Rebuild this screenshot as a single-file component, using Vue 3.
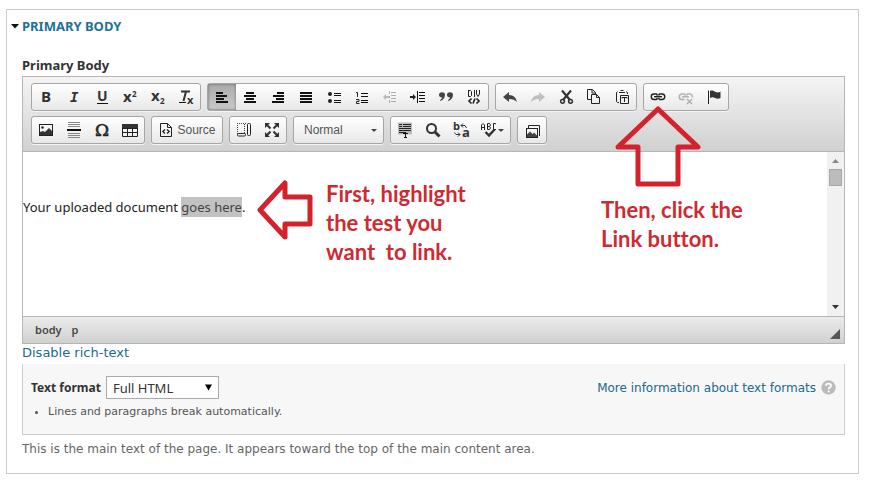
<script setup>
import { ref } from 'vue'

const format = ref('full')
const style = ref('normal')

const glyph = (ch, x, y, size) =>
  `<text x="${x}" y="${y}" font-family="'Open Sans', sans-serif" font-weight="700" font-size="${size}" fill="#333">${ch}</text>`
const slanted = (ch, x, y, size) =>
  `<text x="${x}" y="${y}" font-family="'DejaVu Sans Mono', monospace" font-style="italic" font-weight="700" font-size="${size}" fill="#333">${ch}</text>`
const bars = (rows) =>
  rows.map(([x, y, w, h = 2]) => `<rect x="${x}" y="${y}" width="${w}" height="${h}" fill="#111"/>`).join('')

const firstRow = [
  [
    { label: 'Bold', icon: glyph('B', 3, 13, 15) },
    { label: 'Italic', icon: slanted('I', 4, 13, 14) },
    { label: 'Underline', icon: glyph('U', 3, 12, 14) + bars([[3, 14, 11, 1]]) },
    { label: 'Superscript', icon: glyph('x', 1, 13, 15) + glyph('2', 10, 8, 8) },
    { label: 'Subscript', icon: glyph('x', 1, 12, 15) + glyph('2', 10, 15, 8) },
    { label: 'Remove format', icon: `<path d="M3 2.500H12M8 2.500L5.500 12" fill="none" stroke="#333" stroke-width="2"/>` + bars([[1, 13, 7, 1]]) + glyph('x', 9, 15, 11) },
  ],
  [
    { label: 'Align left', on: true, icon: bars([[2, 3, 7], [2, 6, 11], [2, 9, 8], [2, 12, 12]]) },
    { label: 'Center', icon: bars([[4, 3, 8], [2, 6, 12], [4, 9, 8], [2, 12, 12]]) },
    { label: 'Align right', icon: bars([[7, 3, 7], [3, 6, 11], [6, 9, 8], [2, 12, 12]]) },
    { label: 'Justify', icon: bars([[2, 3, 12], [2, 6, 12], [2, 9, 12], [2, 12, 12]]) },
    { label: 'Bulleted list', icon: `<circle cx="4" cy="5" r="2" fill="#222"/><circle cx="4" cy="12" r="2" fill="#222"/>` + bars([[8, 4, 7, 1], [8, 6, 7, 1], [8, 11, 7, 1], [8, 13, 7, 1]]) },
    { label: 'Numbered list', icon: `<path d="M2 3.500H3.500V8M2 10.500H5V12.500H2.500V14.500H5.500" fill="none" stroke="#222"/>` + bars([[7, 4, 7, 1], [7, 7, 7, 1], [7, 11, 7, 1], [7, 13, 7, 1]]) },
    { label: 'Decrease indent', off: true, icon: `<path d="M1 8L4 5V7H7V9H4V11Z" fill="#333"/>` + bars([[7, 2, 1, 3], [7, 11, 1, 3], [9, 3, 5, 1], [9, 6, 5, 1], [9, 9, 5, 1], [9, 12, 5, 1], [7, 7, 1, 2]]) },
    { label: 'Increase indent', icon: `<path d="M6 8L3 5V7H0V9H3V11Z" fill="#222"/>` + bars([[7, 2, 1, 12], [9, 3, 6, 1], [9, 6, 6, 1], [9, 9, 6, 1], [9, 12, 6, 1]]) },
    { label: 'Block quote', icon: `<path d="M1 6a3 2.700 0 1 1 6 0c0 3-2 5-4.500 6l-.5-1c1.200-.7 2-1.500 2-2.500C2 8.500 1 7.500 1 6zM9 6a3 2.700 0 1 1 6 0c0 3-2 5-4.500 6l-.5-1c1.200-.7 2-1.500 2-2.500C10 8.500 9 7.500 9 6z" fill="#444"/>` },
    { label: 'Create div', icon: `<path d="M2.500 1v6.500h2l1-1V2.500l-1-1h-2M8.500 1v7M10.500 1v4l1.500 2.500L13.500 5V1" fill="none" stroke="#222"/><path d="M5.500 9.500L3 12l2.500 2.500M10.500 9.500L13 12l-2.500 2.500M9 9.500L7 14.500" fill="none" stroke="#222" stroke-width="1.600"/>` },
  ],
  [
    { label: 'Undo', icon: `<path d="M1 8L7 3v3c5 0 7 3 8 7-2-2-4-3-8-3v3z" fill="#444"/>` },
    { label: 'Redo', off: true, icon: `<path d="M15 8L9 3v3c-5 0-7 3-8 7 2-2 4-3 8-3v3z" fill="#444"/>` },
    { label: 'Cut', icon: `<path d="M4 1.500L12 11M13 1.500L5 11" stroke="#333" stroke-width="2.200"/><circle cx="4.500" cy="12.300" r="1.900" fill="none" stroke="#333" stroke-width="1.500"/><circle cx="12.500" cy="12.300" r="1.900" fill="none" stroke="#333" stroke-width="1.500"/>` },
    { label: 'Copy', icon: `<path d="M5.500 10.500H1.500V.5H6.500L9.500 3.500V5M6 .5V4H9.500M5.500 5.500H10.500L13.500 8.500V14.500H5.500ZM10.500 5.500V8.500H13.500" fill="none" stroke="#222"/>` },
    { label: 'Paste as plain text', icon: `<path d="M3.500 2.500L2.500 3.500V12.500L3.500 13.500H5M12 2.500L13.500 3.500V5M5 3.500H11M6.500 1.500H9.500" fill="none" stroke="#222"/><path d="M6.500 6.500H14.500V14.500H6.500ZM8 9.500V8.500H13V9.500M10.500 8.500V13" fill="none" stroke="#222"/>` },
  ],
  [
    { label: 'Link', icon: `<path d="M7.500 6.500L6.500 5H4a2.500 2.500 0 0 0 0 5.500H6.500L7.500 9M8.500 6.500L9.500 5H12a2.500 2.500 0 0 1 0 5.500H9.500L8.500 9" fill="none" stroke="#222" stroke-width="1.400"/><path d="M4 7.700H12" stroke="#222" stroke-width="1.400"/>` },
    { label: 'Unlink', off: true, icon: `<path d="M7.500 6.500L6.500 5H4a2.500 2.500 0 0 0 0 5.500H6.500M8.500 6.500L9.500 5H12a2.500 2.500 0 0 1 2 3.500M4 7.700H11" fill="none" stroke="#222" stroke-width="1.500"/><path d="M9 10L14 15M14 10L9 15" stroke="#222" stroke-width="1.500"/>` },
    { label: 'Anchor', icon: `<path d="M2.500 1.500V15" stroke="#222"/><path d="M4 2c2-1 4 0 5.500 1 2 .8 3.500.5 5-.5V9c-2 1-3.500 1-5.500 0S6 8 4 9z" fill="#333"/>` },
  ],
]

const insertGroup = [
  { label: 'Image', icon: `<rect x="1.500" y="2.500" width="13" height="11" fill="none" stroke="#222"/><circle cx="4.500" cy="5.500" r="1.200" fill="#222"/><path d="M2 13V10l3-1 2 1 4-4 3 3v4z" fill="#333"/>` },
  { label: 'Horizontal line', icon: bars([[1, 7, 14, 2]]) + `<path d="M2 .5H14M2 2.500H14M2 4.500H14M2 11.500H14M2 13.500H14M2 15.500H14" stroke="#888"/>` },
  { label: 'Special character', icon: `<text x="1" y="14" font-family="'DejaVu Serif', serif" font-size="17" fill="#222" stroke="#222" stroke-width=".5">Ω</text>` },
  { label: 'Table', icon: `<path d="M.5 2.500H15.500V14.500H.5ZM.5 6.500H15.500M.5 10.500H15.500M5.500 5V14.500M10.500 5V14.500" fill="none" stroke="#222"/><path d="M0 2H16V6H0z" fill="#333"/>` },
]
const viewGroup = [
  { label: 'Show blocks', icon: `<path d="M1.500 1V12M1 1.500H10M8.500 2V11M2 11.500H9" fill="none" stroke="#444" stroke-dasharray="1 1"/><rect x="11.500" y="1.500" width="3" height="12" rx="1" fill="none" stroke="#222"/><rect x="1.500" y="11.500" width="8" height="2.500" rx="1" fill="#f5f5f5" stroke="#222"/>` },
  { label: 'Maximize', icon: `<path d="M1 1H6L1 6ZM15 1V6L10 1ZM1 15V10L6 15ZM15 15H10L15 10Z" fill="#333"/><path d="M2 2L6.500 6.500M14 2L9.500 6.500M2 14L6.500 9.500M14 14L9.500 9.500" stroke="#333" stroke-width="2"/>` },
]
const toolGroup = [
  { label: 'Select all', icon: `<path d="M1 .5H15V12.500H1z" fill="#bbb"/><path d="M2 2.500H5M6 2.500H14M2 4.500H5M6 4.500H14M2 6.500H14M2 8.500H14M2 10.500H9" stroke="#222"/><path d="M6 11.500H11M8.500 11V15.500M7 15.500H10" stroke="#111"/>` },
  { label: 'Find', icon: `<circle cx="6.500" cy="6.500" r="4.500" fill="none" stroke="#333" stroke-width="2"/><path d="M10 10L14.500 14.500" stroke="#333" stroke-width="3"/>` },
  { label: 'Replace', icon: glyph('b', 0, 8, 11) + glyph('a', 9, 15, 13) + `<path d="M8 3.500H12L13.500 6M10 1.500L8 3.500 10 5.500M1.500 10.500L3 12.500H7M5 10.500L7 12.500 5 14.500" fill="none" stroke="#333"/>` },
  { label: 'Spell check', drop: true, icon: `<path d="M.5 8V3L2 1.500 3.500 3V8M.5 5.500H3.500M6.500 1.500H8.500L9.500 3 8.500 4.500H6.500M8.500 4.500L9.500 6 8.500 7.500H6.500V1.500M15 2L14 1.500H12.500V7.500H15" fill="none" stroke="#222"/><path d="M4.500 10L8 13.500 13.500 7.500" fill="none" stroke="#333" stroke-width="2.400"/>` },
]
const mediaGroup = [
  { label: 'Media browser', icon: `<path d="M4.500 6V3.500H15.500V14" fill="none" stroke="#222"/><rect x="2.500" y="6.500" width="11" height="9" fill="#f5f5f5" stroke="#222"/><path d="M3 15V12.500L6 9.500l2.500 2.500 1.500-1.500 3 3V15z" fill="#444"/>` },
]
</script>

<template>
  <main class="page">
    <section class="fieldset">
      <a class="legend" href="#body">
        <svg width="8" height="5" viewBox="0 0 8 5" aria-hidden="true"><path d="M0 0H8L4 4.500Z" fill="#111" /></svg>
        PRIMARY BODY
      </a>

      <div id="body-label" class="label">Primary Body</div>
      <div class="editor">
        <div class="toolbar">
          <div class="row">
            <div v-for="(group, g) in firstRow" :key="g" class="group">
              <button v-for="b in group" :key="b.label" type="button" class="tool" :class="{ on: b.on, off: b.off }" :aria-label="b.label">
                <svg class="icon" viewBox="0 0 16 16" v-html="b.icon"></svg>
              </button>
            </div>
          </div>
          <div class="row">
            <div class="group">
              <button v-for="b in insertGroup" :key="b.label" type="button" class="tool" :aria-label="b.label">
                <svg class="icon" viewBox="0 0 16 16" v-html="b.icon"></svg>
              </button>
            </div>
            <div class="group">
              <button type="button" class="tool source">
                <svg class="icon" viewBox="0 0 16 16" aria-hidden="true">
                  <path d="M2.500 1.500H9.500L13.500 5.500V14.500H2.500ZM9.500 1.500V5.500H13.500" fill="none" stroke="#222" />
                  <path d="M7 7.500L4.800 9.500 7 11.500M9 7.500L11.200 9.500 9 11.500" fill="none" stroke="#222" stroke-width="1.300" />
                </svg>
                Source
              </button>
            </div>
            <div class="group">
              <button v-for="b in viewGroup" :key="b.label" type="button" class="tool" :aria-label="b.label">
                <svg class="icon" viewBox="0 0 16 16" v-html="b.icon"></svg>
              </button>
            </div>
            <div class="group combo">
              <select v-model="style" aria-label="Paragraph format">
                <option value="normal">Normal</option>
              </select>
              <svg class="caret" viewBox="0 0 6 3" aria-hidden="true"><path d="M0 0H6L3 3Z" /></svg>
            </div>
            <div class="group">
              <button v-for="b in toolGroup" :key="b.label" type="button" class="tool" :class="{ drop: b.drop }" :aria-label="b.label">
                <svg class="icon" viewBox="0 0 16 16" v-html="b.icon"></svg>
                <svg v-if="b.drop" class="caret" viewBox="0 0 6 3"><path d="M0 0H6L3 3Z" /></svg>
              </button>
            </div>
            <div class="group">
              <button v-for="b in mediaGroup" :key="b.label" type="button" class="tool" :aria-label="b.label">
                <svg class="icon" viewBox="0 0 16 16" v-html="b.icon"></svg>
              </button>
            </div>
          </div>
        </div>

        <div class="content">
          <div class="text" contenteditable="true" role="textbox" aria-labelledby="body-label" spellcheck="false">
            <p>Your uploaded document <mark>goes here</mark>.</p>
          </div>
          <div class="scrollbar" aria-hidden="true">
            <svg class="arrow" viewBox="0 0 7 4"><path d="M0 4H7L3.500 0Z" fill="#888" /></svg>
            <span class="thumb"></span>
            <svg class="arrow last" viewBox="0 0 7 4"><path d="M0 0H7L3.500 4Z" fill="#333" /></svg>
          </div>
        </div>

        <div class="status">
          <a href="#path-body">body</a>
          <a href="#path-p">p</a>
          <svg class="grip" viewBox="0 0 10 10" aria-hidden="true"><path d="M10 0V10H0Z" fill="#555" /></svg>
        </div>

        <div class="note first">
          <svg width="56" height="62" viewBox="0 0 56 62" aria-hidden="true">
            <path d="M3 31L28 4V18H53V45H28V58Z" />
          </svg>
          <p>First, highlight<br />the test you<br />want&nbsp; to link.</p>
        </div>
        <div class="note second">
          <svg width="86" height="82" viewBox="0 0 86 82" aria-hidden="true">
            <path d="M43 3L83 41H63V78H23V41H3Z" />
          </svg>
          <p>Then, click the<br />Link button.</p>
        </div>
      </div>

      <a class="toggle" href="#plain">Disable rich-text</a>

      <div class="format">
        <div class="pick">
          <label for="format">Text format</label>
          <span class="select">
            <select id="format" v-model="format">
              <option value="full">Full HTML</option>
            </select>
            <svg width="7" height="7" viewBox="0 0 8 7" aria-hidden="true"><path d="M0 0H8L4 7Z" /></svg>
          </span>
          <a class="more" href="#formats">
            More information about text formats
            <svg width="15" height="15" viewBox="0 0 15 15" aria-hidden="true">
              <circle cx="7.500" cy="7.500" r="7.200" fill="#bbb" />
              <path d="M5 5.800C5 2.800 10 2.800 10 5.700 10 7.400 7.600 7.300 7.600 9.300M7.600 10.600V12.300" fill="none" stroke="#fff" stroke-width="1.800" />
            </svg>
          </a>
        </div>
        <ul>
          <li>Lines and paragraphs break automatically.</li>
        </ul>
      </div>
      <p class="help">This is the main text of the page. It appears toward the top of the main content area.</p>
    </section>
  </main>
</template>

<style>
body {
  background: #fff;
}
</style>

<style scoped>
* {
  box-sizing: border-box;
}
.page {
  padding: 9px 11px 8px 6px;
  font-family: 'DejaVu Sans', 'Noto Sans', sans-serif;
  font-size: 12px;
  line-height: 18px;
  color: #333;
}
a {
  color: #24688a;
  text-decoration: none;
}
p,
ul {
  margin: 0;
}
.fieldset {
  border: 1px solid #ccc;
  padding: 7px 13px 15px 15px;
}
.legend {
  display: flex;
  align-items: center;
  gap: 3px;
  margin-left: -11px;
  color: #1f7296;
  font: 700 13px/18px 'Noto Sans', sans-serif;
}
.label {
  margin-top: 21px;
  font: 700 13px/18px 'Noto Sans', sans-serif;
}
.editor {
  position: relative;
  margin-top: 2px;
  border: 1px solid #b6b6b6;
}
.toolbar {
  display: flex;
  flex-direction: column;
  gap: 5px;
  padding: 6px 8px 7px;
  border-bottom: 1px solid #b6b6b6;
  background: linear-gradient(#f4f4f4, #cfd1cf);
}
.row {
  display: flex;
  flex-wrap: wrap;
  gap: 6px;
}
.group {
  display: flex;
  height: 28px;
  border: 1px solid #a6a6a6;
  border-radius: 3px;
  background: linear-gradient(#fff, #e8e8e8);
  box-shadow: 0 1px 0 #f4f4f4;
}
.tool {
  display: flex;
  align-items: center;
  justify-content: center;
  width: 28px;
  padding: 0;
  border: 0;
  background: none;
  color: #555;
  font: 12px 'Liberation Sans', sans-serif;
}
.tool.on {
  background: linear-gradient(#aaa, #cacaca);
  box-shadow: inset 0 0 3px #666;
}
.tool.off .icon {
  opacity: 0.3;
}
.tool.source {
  width: 70px;
  gap: 3px;
}
.tool.drop {
  width: 35px;
  gap: 1px;
}
.icon {
  width: 16px;
  height: 16px;
  overflow: visible;
}
.caret {
  width: 6px;
  height: 3px;
  fill: #444;
}
.combo {
  align-items: center;
  width: 91px;
  padding-right: 6px;
}
.combo select {
  flex: 1;
  min-width: 0;
  padding: 0 0 0 10px;
  border: 0;
  appearance: none;
  background: none;
  color: #555;
  font: 12px 'Liberation Sans', sans-serif;
}
.content {
  display: flex;
  min-height: 164px;
}
.text {
  flex: 1;
  padding-top: 46px;
  color: #222;
  font: 13px/18px 'Noto Sans', sans-serif;
}
mark {
  padding: 1px 0;
  background: #c2c2c2;
  color: #444;
}
.scrollbar {
  display: flex;
  flex-direction: column;
  align-items: center;
  width: 17px;
  padding: 7px 0;
  background: #f1f1f1;
}
.arrow {
  width: 7px;
  height: 4px;
}
.arrow.last {
  margin-top: auto;
}
.thumb {
  width: 13px;
  height: 17px;
  margin-top: 6px;
  border: 1px solid #a8a8a8;
  background: #bcbcbc;
}
.status {
  display: flex;
  align-items: center;
  gap: 10px;
  height: 27px;
  padding: 0 4px 0 12px;
  border-top: 1px solid #b6b6b6;
  background: linear-gradient(#ebebeb, #cfd1cf);
  font: 600 11px/18px 'Noto Sans', sans-serif;
}
.status a {
  color: #484848;
}
.grip {
  width: 10px;
  height: 10px;
  margin: 8px 0 0 auto;
}
.note {
  position: absolute;
  color: #cf2a32;
  font: 700 22px/29px Lato, sans-serif;
  font-variant-ligatures: none;
  white-space: nowrap;
  pointer-events: none;
}
.note svg {
  fill: #fff;
  stroke: #d3222c;
  stroke-width: 5;
  stroke-linejoin: round;
}
.note.first {
  display: flex;
  gap: 13px;
  left: 234px;
  top: 102px;
}
.note.second {
  left: 578px;
  top: 29px;
}
.note.second svg {
  display: block;
  margin-left: 14px;
}
.note.second svg path {
  fill: none;
}
.note.second p {
  margin-top: 7px;
}
.toggle {
  display: block;
  width: fit-content;
  font-size: 13px;
}
.format {
  margin-top: 2px;
  padding: 12px 8px 13px;
  border: 1px solid #ccc;
  border-top: 0;
  background: #f7f7f7;
  color: #555;
}
.pick {
  display: flex;
  align-items: center;
}
.pick label {
  margin-right: 5px;
  color: #333;
  font: 700 12px/18px 'Noto Sans', sans-serif;
}
.select {
  display: flex;
  align-items: center;
  width: 113px;
  height: 23px;
  padding-right: 6px;
  border: 1px solid #aaa;
  background: #fff;
}
.select select {
  flex: 1;
  min-width: 0;
  padding: 0 0 0 6px;
  border: 0;
  appearance: none;
  background: none;
  color: #333;
  font: 13px 'Noto Sans', sans-serif;
}
.more {
  display: flex;
  align-items: center;
  gap: 5px;
  margin-left: auto;
}
.format ul {
  margin-top: 4px;
  padding-left: 17px;
  font-size: 11px;
}
.help {
  margin-top: 5px;
  color: #666;
}
</style>
